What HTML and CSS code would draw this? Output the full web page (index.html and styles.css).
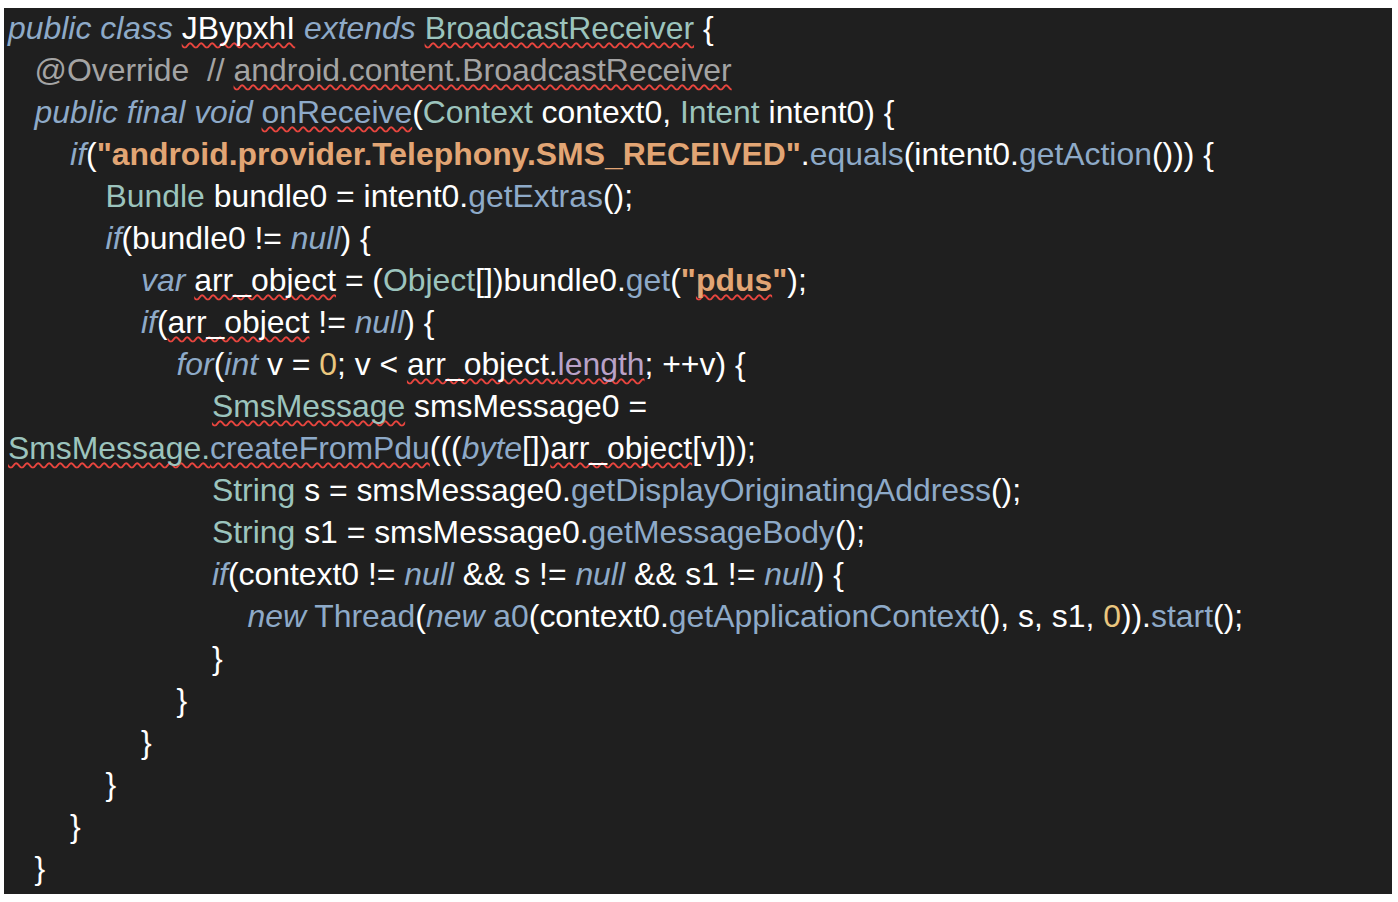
FILE: index.html
```html
<!DOCTYPE html>
<html lang="en">
<head>
<meta charset="utf-8">
<title>JBypxhI</title>
<link rel="stylesheet" href="styles.css">
</head>
<body>
<main class="code">
<div class="lines">
<div class="ln"><span class="kw">public class</span> <span class="err">JBypxhI</span> <span class="kw">extends</span> <span class="ty err">BroadcastReceiver</span> {</div>
<div class="ln i1"><span class="cm">@Override  // <span class="err">android.content.BroadcastReceiver</span></span></div>
<div class="ln i1"><span class="kw">public final void</span> <span class="fn err">onReceive</span>(<span class="ty">Context</span> context0, <span class="ty">Intent</span> intent0) {</div>
<div class="ln i2"><span class="kw">if</span>(<span class="str">"android.provider.Telephony.SMS_RECEIVED"</span>.<span class="fn">equals</span>(intent0.<span class="fn">getAction</span>())) {</div>
<div class="ln i3"><span class="ty">Bundle</span> bundle0 = intent0.<span class="fn">getExtras</span>();</div>
<div class="ln i3"><span class="kw">if</span>(bundle0 != <span class="kw">null</span>) {</div>
<div class="ln i4"><span class="kw">var</span> <span class="err">arr_object</span> = (<span class="ty">Object</span>[])bundle0.<span class="fn">get</span>(<span class="str">"<span class="err">pdus</span>"</span>);</div>
<div class="ln i4"><span class="kw">if</span>(<span class="err">arr_object</span> != <span class="kw">null</span>) {</div>
<div class="ln i5"><span class="kw">for</span>(<span class="kw">int</span> v = <span class="num">0</span>; v &lt; <span class="err">arr_object.<span class="prop">length</span></span>; ++v) {</div>
<div class="ln i6"><span class="ty err">SmsMessage</span> smsMessage0 =</div>
<div class="ln"><span class="err"><span class="ty">SmsMessage.</span><span class="fn">createFromPdu</span></span>(((<span class="kw">byte</span>[])<span class="err">arr_object</span>[v]));</div>
<div class="ln i6"><span class="ty">String</span> s = smsMessage0.<span class="fn">getDisplayOriginatingAddress</span>();</div>
<div class="ln i6"><span class="ty">String</span> s1 = smsMessage0.<span class="fn">getMessageBody</span>();</div>
<div class="ln i6"><span class="kw">if</span>(context0 != <span class="kw">null</span> &amp;&amp; s != <span class="kw">null</span> &amp;&amp; s1 != <span class="kw">null</span>) {</div>
<div class="ln i7"><span class="kw">new</span> <span class="fn">Thread</span>(<span class="kw">new</span> <span class="fn">a0</span>(context0.<span class="fn">getApplicationContext</span>(), s, s1, <span class="num">0</span>)).<span class="fn">start</span>();</div>
<div class="ln i6">}</div>
<div class="ln i5">}</div>
<div class="ln i4">}</div>
<div class="ln i3">}</div>
<div class="ln i2">}</div>
<div class="ln i1">}</div>
</div>
</main>
</body>
</html>
```

FILE: styles.css
```css
html, body {
  margin: 0;
  padding: 0;
  background: #ffffff;
}

.code {
  box-sizing: border-box;
  margin: 8px 6px 8px 4px;
  height: 886px;
  padding: 0 0 0 4px;
  background: #1f1f1f;
  color: #ffffff;
  font-family: "Liberation Sans", Arial, Helvetica, sans-serif;
  font-size: 31.9px;
  line-height: 42px;
  overflow: hidden;
}

.lines {
  margin-top: -1.5px;
}

.ln {
  white-space: pre;
}

.i1 { padding-left: 0.834em; }
.i2 { padding-left: 1.946em; }
.i3 { padding-left: 3.058em; }
.i4 { padding-left: 4.17em; }
.i5 { padding-left: 5.282em; }
.i6 { padding-left: 6.394em; }
.i7 { padding-left: 7.506em; }

.kw {
  color: #8eaac8;
  font-style: italic;
}

.fn {
  color: #8eaac8;
}

.ty {
  color: #9cc4bd;
}

.str {
  color: #e2a574;
  font-weight: bold;
}

.num {
  color: #eac67e;
}

.prop {
  color: #b9a2c8;
}

.cm {
  color: #a4a4a4;
}

.err {
  text-decoration-line: underline;
  text-decoration-style: wavy;
  text-decoration-color: #e8453e;
  text-decoration-thickness: 1.7px;
  text-underline-offset: 3px;
  text-decoration-skip-ink: none;
}
```
